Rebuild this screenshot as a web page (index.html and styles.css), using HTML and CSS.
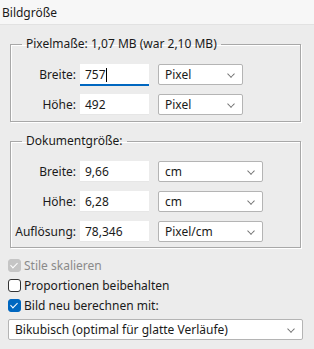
FILE: index.html
```html
<!DOCTYPE html>
<html lang="de">
<head>
    <meta charset="UTF-8">
    <title>Bildgröße</title>
    <link rel="stylesheet" href="styles.css">
</head>
<body>
    <div class="titlebar">Bildgröße</div>

    <div class="dialog">
        <fieldset class="group group-pixel">
            <legend>Pixelmaße: 1,07 MB (war 2,10 MB)</legend>
            <div class="row">
                <label>Breite:</label>
                <div class="field active">757<span class="caret"></span></div>
                <div class="select">Pixel<span class="chevron"></span></div>
            </div>
            <div class="row">
                <label>Höhe:</label>
                <div class="field">492</div>
                <div class="select">Pixel<span class="chevron"></span></div>
            </div>
        </fieldset>

        <fieldset class="group group-doc">
            <legend>Dokumentgröße:</legend>
            <div class="row">
                <label>Breite:</label>
                <div class="field">9,66</div>
                <div class="select">cm<span class="chevron"></span></div>
            </div>
            <div class="row">
                <label>Höhe:</label>
                <div class="field">6,28</div>
                <div class="select">cm<span class="chevron"></span></div>
            </div>
            <div class="row">
                <label>Auflösung:</label>
                <div class="field">78,346</div>
                <div class="select">Pixel/cm<span class="chevron"></span></div>
            </div>
        </fieldset>

        <div class="checks">
            <div class="check disabled"><span class="box checked"></span>Stile skalieren</div>
            <div class="check"><span class="box"></span>Proportionen beibehalten</div>
            <div class="check"><span class="box checked"></span>Bild neu berechnen mit:</div>
        </div>

        <div class="select wide">Bikubisch (optimal für glatte Verläufe)<span class="chevron"></span></div>
    </div>
</body>
</html>
```

FILE: styles.css
```css
body {
    margin: 0;
    background: #ececec;
    font-family: 'Noto Sans', 'Open Sans', sans-serif;
    font-size: 12px;
    color: #1a1a1a;
}
.titlebar {
    height: 24px;
    line-height: 26px;
    padding-left: 2px;
    background: #f7f7f7;
    border-bottom: 1px solid #e2e2e2;
}
.dialog {
    padding: 11px 13px 0 8px;
}
.group {
    margin: 0 0 0 2px;
    padding: 12px 0 6px 0;
    border: 1px solid #a8a8a8;
    box-shadow: inset 1px 1px 0 #fff, 1px 1px 0 #fff;
    min-width: 0;
}
.group legend {
    margin-left: 11px;
    padding: 0 4px;
    line-height: 16px;
}
.group-doc {
    margin-top: 11px;
    padding-bottom: 5px;
}
.row {
    display: flex;
    align-items: center;
    height: 21px;
}
.row + .row {
    margin-top: 9px;
}
.row label {
    width: 65px;
    text-align: right;
    margin-right: 4px;
}
.field {
    width: 69px;
    height: 21px;
    line-height: 21px;
    padding-left: 5px;
    background: #fff;
    border-bottom: 1px solid #e6e6e6;
    box-sizing: border-box;
}
.field.active {
    border-bottom: 2px solid #0067c0;
    height: 22px;
    margin-top: 1px;
}
.caret {
    display: inline-block;
    width: 1px;
    height: 14px;
    background: #000;
    vertical-align: -3px;
}
.select {
    position: relative;
    margin-left: 9px;
    width: 85px;
    height: 21px;
    line-height: 19px;
    padding-left: 6px;
    box-sizing: border-box;
    background: #fff;
    border: 1px solid #b4b4b4;
    border-radius: 2px;
}
.group-doc .select {
    width: 105px;
}
.chevron {
    position: absolute;
    right: 8px;
    top: 6px;
    width: 5px;
    height: 5px;
    border-right: 1px solid #707070;
    border-bottom: 1px solid #707070;
    transform: rotate(45deg) scale(0.9, 0.9);
}
.checks {
    margin-top: 7px;
}
.check {
    display: flex;
    align-items: center;
    height: 20px;
}
.box {
    width: 13px;
    height: 13px;
    box-sizing: border-box;
    margin-right: 3px;
    border: 1px solid #333;
    border-radius: 3px;
    background: #fff;
    position: relative;
}
.box.checked {
    background: #0067c0;
    border-color: #0067c0;
}
.box.checked::after {
    content: '';
    position: absolute;
    left: 3px;
    top: 1px;
    width: 3px;
    height: 6px;
    border-right: 1.5px solid #fff;
    border-bottom: 1.5px solid #fff;
    transform: rotate(45deg);
}
.check.disabled {
    color: #8a8a8a;
}
.check.disabled .box {
    background: #c5c5c5;
    border-color: #c5c5c5;
}
.select.wide {
    margin: 4px 0 0 0;
    width: 295px;
}
```
